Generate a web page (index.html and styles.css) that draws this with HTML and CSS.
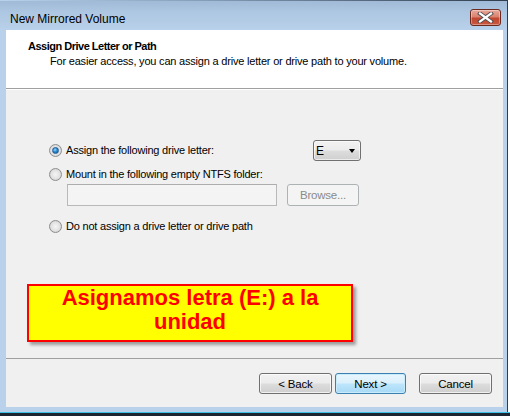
FILE: index.html
```html
<!DOCTYPE html>
<html>
<head>
<meta charset="utf-8">
<link rel="stylesheet" href="styles.css">
</head>
<body>
<div class="window">
  <div class="titlebar">
    <span class="title">New Mirrored Volume</span>
    <div class="close">
      <svg width="17" height="11" viewBox="0 0 17 11"><path d="M3 1.5 L14 9.5 M14 1.5 L3 9.5" stroke="#4a4a4a" stroke-width="4" stroke-linecap="square" fill="none"/><path d="M3 1.5 L14 9.5 M14 1.5 L3 9.5" stroke="#ffffff" stroke-width="2.2" stroke-linecap="square" fill="none"/></svg>
    </div>
  </div>
  <div class="client">
    <div class="header">
      <div class="h1">Assign Drive Letter or Path</div>
      <div class="sub">For easier access, you can assign a drive letter or drive path to your volume.</div>
    </div>
    <div class="body">
      <div class="row r1">
        <span class="radio checked"></span>
        <span class="label">Assign the following drive letter:</span>
        <div class="combo"><span>E</span><span class="arrow"></span></div>
      </div>
      <div class="row r2">
        <span class="radio"></span>
        <span class="label">Mount in the following empty NTFS folder:</span>
      </div>
      <div class="row r3">
        <div class="textbox"></div>
        <div class="btn disabled">Browse...</div>
      </div>
      <div class="row r4">
        <span class="radio"></span>
        <span class="label">Do not assign a drive letter or drive path</span>
      </div>
      <div class="note">Asignamos letra (E:) a la<br>unidad</div>
    </div>
    <div class="footer">
      <div class="btn back">&lt; Back</div>
      <div class="btn next">Next &gt;</div>
      <div class="btn cancel">Cancel</div>
    </div>
  </div>
</div>
<div class="taskbar"></div>
</body>
</html>
```
FILE: styles.css
```css
html, body {
  margin: 0;
  padding: 0;
  background: #ffffff;
}
body {
  width: 510px;
  height: 416px;
  overflow: hidden;
  font-family: "Liberation Sans", Arial, sans-serif;
  font-size: 11px;
  letter-spacing: -0.2px;
  color: #000;
}
.window {
  position: relative;
  width: 507px;
  height: 412px;
  background: #b9d1ea;
  border-right: 1px solid #2f3d4d;
  box-sizing: content-box;
  display: flex;
  flex-direction: column;
}
.window::before {
  content: "";
  position: absolute;
  left: 0;
  top: 0;
  right: 0;
  height: 1px;
  background: linear-gradient(to right, #b9d1ea 0%, #7f96b0 45%, #2f3d4d 100%);
}
.titlebar {
  height: 30px;
  display: flex;
  align-items: flex-start;
  background: linear-gradient(#9fb9d6 0%, #adc6e1 40%, #b9d1ea 100%);
  box-sizing: border-box;
}
.title {
  margin: 12px 0 0 10px;
  font-size: 12px;
  line-height: 15px;
  letter-spacing: 0;
  color: #000;
  flex: 1;
}
.close {
  width: 29px;
  height: 15px;
  margin: 9px 6px 0 0;
  border: 1px solid #6b2a20;
  border-radius: 3px;
  background: linear-gradient(#e9a99b 0%, #d9826f 45%, #c2462f 55%, #c9583f 100%);
  display: flex;
  align-items: center;
  justify-content: center;
  box-shadow: inset 0 0 0 1px rgba(255,255,255,0.35);
}
.close svg { display: block; }
.client {
  margin: 0 4px 5px 6px;
  flex: 1;
  display: flex;
  flex-direction: column;
  background: #f0f0f0;
}
.header {
  height: 58px;
  background: #ffffff;
  border-bottom: 1px solid #a0a0a0;
  box-sizing: content-box;
  padding: 0;
}
.h1 {
  font-weight: bold;
  margin: 9px 0 0 22px;
  line-height: 15px;
  letter-spacing: -0.5px;
}
.sub {
  margin: 0 0 0 44px;
  line-height: 15px;
}
.body {
  height: 270px;
  border-top: 1px solid #ffffff;
  border-bottom: 1px solid #a0a0a0;
  padding-top: 50px;
  box-sizing: border-box;
}
.row {
  display: flex;
  align-items: center;
}
.r1 { height: 21px; padding-left: 43px; }
.r2 { height: 13px; padding-left: 43px; margin-top: 7px; }
.r3 { height: 22px; padding-left: 61px; margin-top: 3px; }
.r4 { height: 13px; padding-left: 43px; margin-top: 14px; }
.radio {
  width: 11px;
  height: 11px;
  border: 1px solid #8d8e8f;
  border-radius: 50%;
  background: radial-gradient(circle at 50% 50%, #f5f5f5 0%, #e2e2e2 55%, #cfcfcf 80%, #f8f8f8 100%);
  flex: none;
  display: flex;
  align-items: center;
  justify-content: center;
}
.radio.checked::after {
  content: "";
  width: 5px;
  height: 5px;
  border-radius: 50%;
  background: radial-gradient(circle at 40% 35%, #9cd8ff 0%, #2c8bd6 45%, #0e4f91 100%);
  border: 1px solid #1f5d95;
}
.label {
  margin-left: 4px;
  line-height: 13px;
}
.combo {
  margin-left: auto;
  margin-right: 142px;
  height: 19px;
  border: 1px solid #707070;
  border-radius: 3px;
  background: linear-gradient(#f2f2f2 0%, #ebebeb 49%, #dddddd 51%, #cfcfcf 100%);
  display: flex;
  align-items: center;
  padding: 0 5px 0 2px;
  box-sizing: content-box;
  width: 39px;
  box-shadow: inset 0 0 0 1px rgba(255,255,255,0.6);
}
.combo span:first-child { flex: 1; font-size: 12px; }
.arrow {
  width: 0;
  height: 0;
  border-left: 3.5px solid transparent;
  border-right: 3.5px solid transparent;
  border-top: 4px solid #000;
}
.textbox {
  width: 208px;
  height: 20px;
  border: 1px solid #b9b9b9;
  border-top-color: #adadad;
  background: #f4f4f4;
}
.btn {
  height: 19px;
  border: 1px solid #707070;
  border-radius: 3px;
  background: linear-gradient(#f2f2f2 0%, #ebebeb 49%, #dddddd 51%, #cfcfcf 100%);
  box-shadow: inset 0 0 0 1px rgba(255,255,255,0.7);
  display: flex;
  align-items: center;
  justify-content: center;
  font-size: 11.5px;
  box-sizing: content-box;
}
.btn.disabled {
  margin-left: 10px;
  width: 70px;
  height: 20px;
  border-color: #adb2b5;
  background: #f4f4f4;
  color: #8a8a8a;
  box-shadow: none;
}
.note {
  margin: 51px 0 0 21px;
  width: 322px;
  border: 2px solid #ff0000;
  background: #ffff00;
  color: #ff0000;
  font-weight: bold;
  font-size: 22px;
  letter-spacing: 0;
  line-height: 24px;
  text-align: center;
  padding-top: 0;
  box-sizing: content-box;
  height: 54px;
  box-shadow: 3px 3px 3px rgba(0,0,0,0.35);
}
.footer {
  flex: 1;
  display: flex;
  justify-content: flex-end;
  align-items: flex-start;
  padding: 14px 11px 0 0;
}
.back { width: 71px; }
.next {
  width: 69px;
  margin-left: 3px;
  border-color: #3c7fb1;
  background: linear-gradient(#eaf6fd 0%, #d9f0fc 49%, #bee6fd 51%, #a7d9f5 100%);
  box-shadow: inset 0 0 0 1px #c9ecfd;
}
.cancel { width: 71px; margin-left: 13px; }
.taskbar {
  height: 4px;
  border-top: 1px solid #3ec3e6;
  background: #1c2633;
}
```
